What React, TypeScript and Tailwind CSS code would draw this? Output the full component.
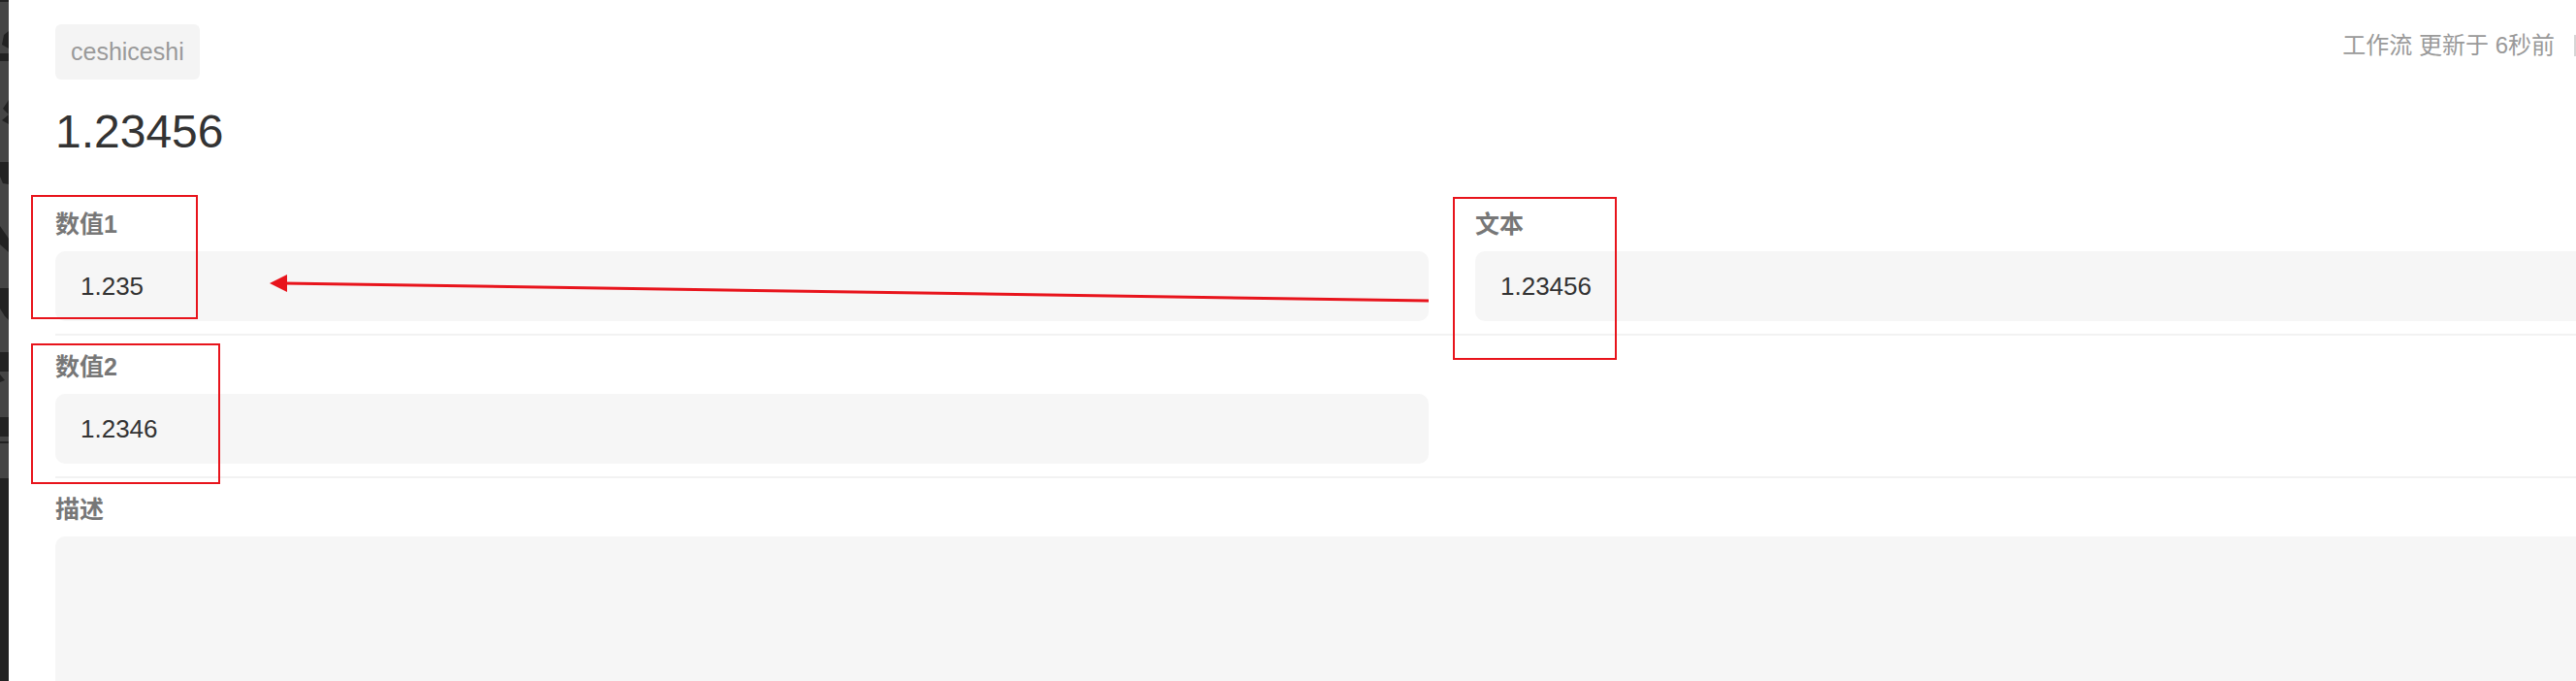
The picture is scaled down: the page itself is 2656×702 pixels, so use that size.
import React from "react";

const FONT = { fontFamily: '"Liberation Sans", Arial, "Noto Sans CJK SC", sans-serif' };

function Field({ label, value }: { label: string; value?: string }) {
  return (
    <div>
      <div className="h-[36px] leading-[36px] text-[25px] font-bold text-[#777777]">{label}</div>
      <div className="mt-[10px] h-[72px] rounded-[10px] bg-[#f6f6f6] flex items-center pl-[26px] text-[26px] text-[#333333]">
        {value}
      </div>
    </div>
  );
}

function SideStrip() {
  return (
    <div className="w-[9px] shrink-0 h-full bg-[#454545]">
      <svg width="9" height="702" viewBox="0 0 9 702">
        <rect x="0" y="0" width="9" height="2" fill="#222" />
        <path d="M9 32 L4 36 L2 46 L9 50 Z" fill="#222" />
        <rect x="0" y="55" width="9" height="8" fill="#222" />
        <path d="M9 103 L3 112 L9 118 L2 124 L9 128 Z" fill="#222" />
        <rect x="0" y="167" width="9" height="4" fill="#222" />
        <path d="M0 171 L9 171 L9 190 L3 189 L0 182 Z" fill="#222" />
        <path d="M0 233 L9 246 L9 260 L0 252 Z" fill="#222" />
        <path d="M0 297 L9 297 L9 330 L5 326 L0 318 Z" fill="#222" />
        <rect x="0" y="363" width="9" height="20" fill="#222" />
        <path d="M0 386 L5 392 L0 394 Z" fill="#222" />
        <rect x="0" y="430" width="9" height="20" fill="#222" />
        <rect x="0" y="455" width="9" height="2" fill="#222" />
        <rect x="0" y="493" width="9" height="209" fill="#222" />
      </svg>
    </div>
  );
}

export default function App() {
  return (
    <div className="relative w-[2656px] h-[702px] overflow-hidden flex bg-white" style={FONT}>
      <SideStrip />
      <div className="flex-1 min-w-0 pl-[48px] pt-[25px]">
        <div className="flex items-start justify-between">
          <div className="h-[57px] px-[16px] rounded-[6px] bg-[#f4f4f4] flex items-center text-[25px] text-[#9a9a9a]">
            ceshiceshi
          </div>
          <div className="mt-[6px] flex items-center gap-[20px]">
            <span className="text-[24px] leading-[32px] text-[#9a9a9a]">工作流 更新于 6秒前</span>
            <span className="w-[2px] h-[22px] bg-[#d6d6d6]" />
          </div>
        </div>
        <div className="mt-[24px] text-[48px] leading-[60px] text-[#333333]">1.23456</div>
        <div className="mt-[33px] w-[2880px]">
          <div className="grid grid-cols-2 gap-x-[48px] pt-[14px] pb-[13px] border-b-2 border-[#f2f2f2]">
            <Field label="数值1" value="1.235" />
            <Field label="文本" value="1.23456" />
          </div>
          <div className="grid grid-cols-2 gap-x-[48px] pt-[14px] pb-[13px] border-b-2 border-[#f2f2f2]">
            <Field label="数值2" value="1.2346" />
            <div />
          </div>
          <div className="pt-[14px]">
            <div className="h-[36px] leading-[36px] text-[25px] font-bold text-[#777777]">描述</div>
            <div className="mt-[10px] h-[220px] rounded-[10px] bg-[#f6f6f6]" />
          </div>
        </div>
      </div>
      <svg
        className="absolute inset-0 pointer-events-none"
        width="2656"
        height="702"
        viewBox="0 0 2656 702"
      >
        <rect x="33" y="202" width="170" height="126" fill="none" stroke="#e8141c" strokeWidth="2" />
        <rect x="33" y="355" width="193" height="143" fill="none" stroke="#e8141c" strokeWidth="2" />
        <rect x="1499" y="204" width="167" height="166" fill="none" stroke="#e8141c" strokeWidth="2" />
        <line x1="1473" y1="310" x2="292" y2="292" stroke="#e8141c" strokeWidth="3" />
        <polygon points="278,292 296,283 296,301" fill="#e8141c" />
      </svg>
    </div>
  );
}
